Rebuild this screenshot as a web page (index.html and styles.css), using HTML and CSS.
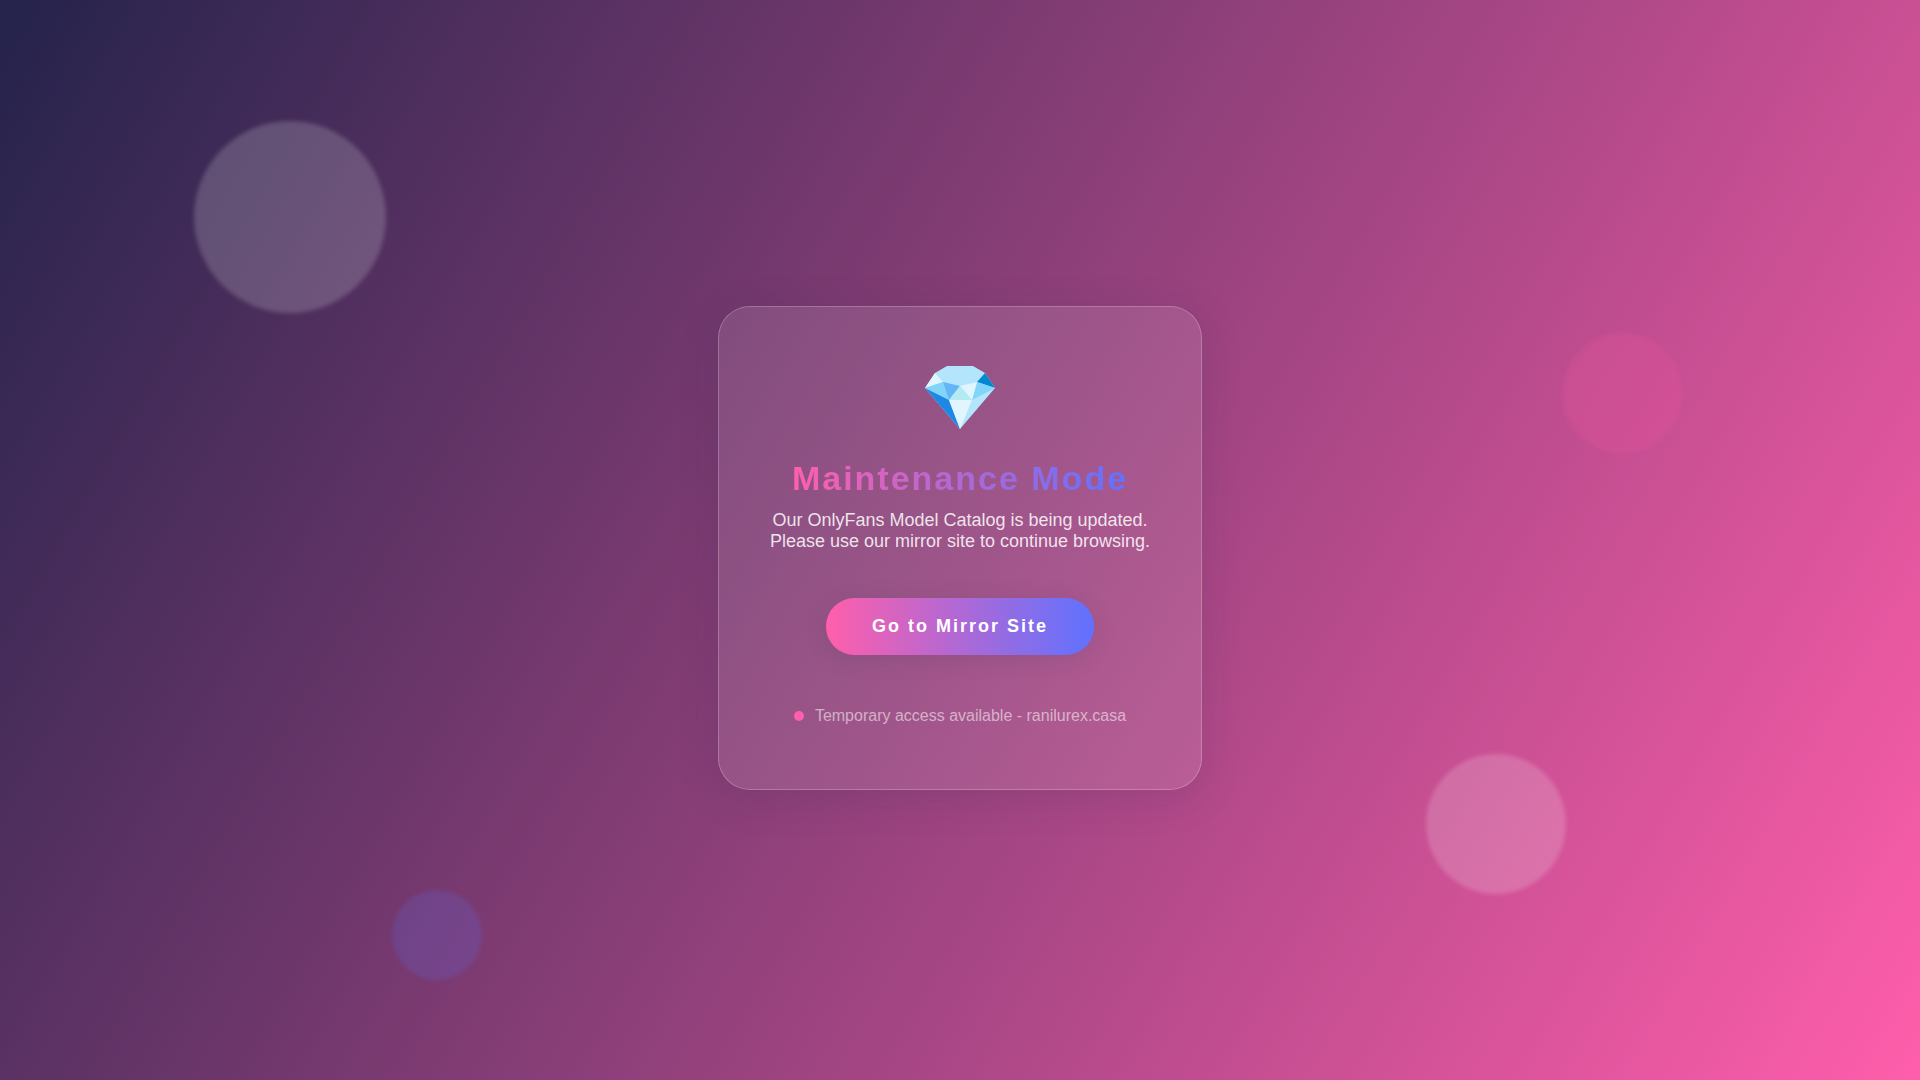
FILE: index.html
```html
<!DOCTYPE html>
<html lang="en">
<head>
<meta charset="utf-8">
<meta name="viewport" content="width=device-width, initial-scale=1">
<title>Maintenance Mode</title>
<link rel="stylesheet" href="styles.css">
</head>
<body>
<div class="bubble bubble-large"></div>
<div class="bubble bubble-pink"></div>
<div class="bubble bubble-medium"></div>
<div class="bubble bubble-blue"></div>
<main class="card">
  <svg class="gem" viewBox="0 0 70 63" aria-hidden="true">
    <path fill="#b3e5fc" d="M10 7 22 0H48L60 7 70 22 35 63 0 22Z"/>
    <path fill="#e1f5fe" d="M10 7 18 16 0 22Z"/>
    <path fill="#0288d1" d="M60 7 70 22 52 16Z"/>
    <path fill="#81d4fa" d="M18 16 24 34 0 22ZM52 16 70 22 47 34Z"/>
    <path fill="#64b5f6" d="M18 16 35 20 24 34Z"/>
    <path fill="#e1f5fe" d="M52 16 35 20 47 34Z"/>
    <path fill="#b2ebf2" d="M35 20 47 34H24Z"/>
    <path fill="#1e88e5" d="M0 22 24 34 35 63Z"/>
    <path fill="#e1f5fe" d="M24 34H47L35 63Z"/>
  </svg>
  <h1 class="title">Maintenance Mode</h1>
  <p class="message">Our OnlyFans Model Catalog is being updated.<br>Please use our mirror site to continue browsing.</p>
  <button class="mirror" type="button">Go to Mirror Site</button>
  <p class="status"><span class="dot"></span>Temporary access available - ranilurex.casa</p>
</main>
</body>
</html>
```
FILE: styles.css
```css
* {
  box-sizing: border-box;
}

body {
  margin: 0;
  min-height: 100vh;
  padding-top: 16px;
  display: flex;
  align-items: center;
  justify-content: center;
  overflow: hidden;
  background: linear-gradient(120deg, #24234b 0%, #ff5eab 100%);
  font-family: "Liberation Sans", Arial, sans-serif;
  color: #fff;
}

.bubble {
  position: absolute;
  border-radius: 50%;
  filter: blur(2px);
}

.bubble-large {
  width: 192px;
  height: 192px;
  left: 194px;
  top: 121px;
  background: rgba(255, 255, 255, 0.18);
}

.bubble-pink {
  width: 120px;
  height: 120px;
  right: 238px;
  top: 333px;
  background: rgba(255, 86, 164, 0.18);
}

.bubble-medium {
  width: 140px;
  height: 140px;
  right: 354px;
  bottom: 186px;
  background: rgba(255, 255, 255, 0.18);
}

.bubble-blue {
  width: 90px;
  height: 90px;
  left: 392px;
  bottom: 100px;
  background: rgba(94, 114, 255, 0.18);
}

.card {
  position: relative;
  display: flex;
  flex-direction: column;
  align-items: center;
  padding: 59px 51px 64px;
  border: 1px solid rgba(255, 255, 255, 0.22);
  border-radius: 32px;
  background: rgba(255, 255, 255, 0.11);
  box-shadow: 0 8px 40px rgba(31, 38, 73, 0.15);
  text-align: center;
}

.gem {
  width: 70px;
  height: 63px;
}

.title {
  margin: 29px 0 12px;
  font-size: 34px;
  line-height: 40px;
  letter-spacing: 2px;
  background: linear-gradient(90deg, #ff5fab, #5f72ff);
  background-clip: text;
  -webkit-background-clip: text;
  color: transparent;
}

.message {
  margin: 0 0 46px;
  font-size: 18px;
  line-height: 21px;
  color: rgba(255, 255, 255, 0.85);
}

.mirror {
  padding: 18px 46px;
  border: 0;
  border-radius: 32px;
  background: linear-gradient(90deg, #ff5fab, #5f72ff);
  box-shadow: 0 4px 24px rgba(31, 38, 73, 0.12);
  color: #fff;
  font: bold 18px/21px "Liberation Sans", Arial, sans-serif;
  letter-spacing: 2px;
}

.status {
  display: flex;
  align-items: center;
  gap: 11px;
  margin: 52px 0 0;
  font-size: 16px;
  line-height: 18px;
  color: rgba(255, 255, 255, 0.55);
}

.dot {
  width: 10px;
  height: 10px;
  border-radius: 50%;
  background: #ff5fab;
}
```
